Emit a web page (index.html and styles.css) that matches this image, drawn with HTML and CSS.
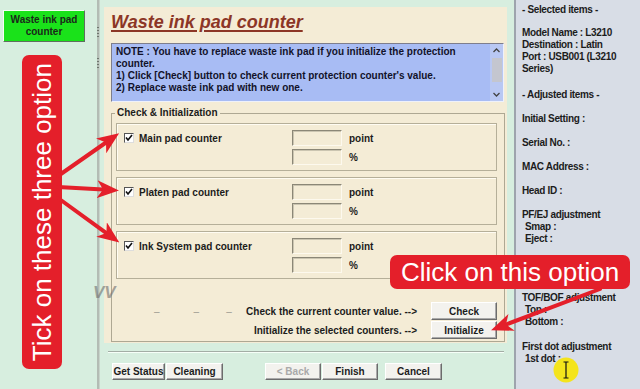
FILE: index.html
```html
<!DOCTYPE html>
<html lang="en">
<head>
    <meta charset="UTF-8">
    <title>Waste ink pad counter</title>
    <link rel="stylesheet" href="styles.css">
</head>
<body>
    <div class="screen">
        <aside class="sidebar">
            <button class="nav-btn">Waste ink pad<br>counter</button>
        </aside>

        <div class="splitter">
            <span class="grip"></span>
            <span class="grip grip-low"></span>
        </div>

        <main class="wizard">
            <section class="panel">
                <h1 class="title">Waste ink pad counter</h1>

                <div class="note">
                    <p>NOTE : You have to replace waste ink pad if you initialize the protection counter.<br>1) Click [Check] button to check current protection counter's value.<br>2) Replace waste ink pad with new one.</p>
                    <div class="scrollbar">
                        <svg width="9" height="12" viewBox="0 0 9 12"><path d="M1.5 8 L4.5 5 L7.5 8" fill="none" stroke="#444" stroke-width="1.3"/></svg>
                        <span class="thumb"></span>
                        <svg class="scroll-down" width="9" height="12" viewBox="0 0 9 12"><path d="M1.5 4 L4.5 7 L7.5 4" fill="none" stroke="#444" stroke-width="1.3"/></svg>
                    </div>
                </div>

                <fieldset class="group">
                    <legend>Check &amp; Initialization</legend>

                    <div class="counter">
                        <label class="check"><span class="box"><svg width="8" height="8" viewBox="0 0 8 8"><path d="M1 3.5 L3 6 L7 1" fill="none" stroke="#111" stroke-width="1.6"/></svg></span>Main pad counter</label>
                        <span class="field"></span>
                        <span>point</span>
                        <span></span>
                        <span class="field"></span>
                        <span>%</span>
                    </div>

                    <div class="counter">
                        <label class="check"><span class="box"><svg width="8" height="8" viewBox="0 0 8 8"><path d="M1 3.5 L3 6 L7 1" fill="none" stroke="#111" stroke-width="1.6"/></svg></span>Platen pad counter</label>
                        <span class="field"></span>
                        <span>point</span>
                        <span></span>
                        <span class="field"></span>
                        <span>%</span>
                    </div>

                    <div class="counter">
                        <label class="check"><span class="box"><svg width="8" height="8" viewBox="0 0 8 8"><path d="M1 3.5 L3 6 L7 1" fill="none" stroke="#111" stroke-width="1.6"/></svg></span>Ink System pad counter</label>
                        <span class="field"></span>
                        <span>point</span>
                        <span></span>
                        <span class="field"></span>
                        <span>%</span>
                    </div>

                    <div class="action">
                        <div class="action-row">
                            <span class="dashes"><span>–</span><span>–</span><span>–</span></span>
                            <span>Check the current counter value. --&gt;</span>
                            <button class="btn btn-wide">Check</button>
                        </div>
                        <div class="action-row">
                            <span>Initialize the selected counters. --&gt;</span>
                            <button class="btn btn-wide">Initialize</button>
                        </div>
                    </div>
                </fieldset>
            </section>

            <div class="separator"></div>

            <div class="footer">
                <button class="btn btn-status">Get Status</button>
                <button class="btn btn-clean">Cleaning</button>
                <button class="btn btn-back" disabled>&lt; Back</button>
                <button class="btn btn-finish">Finish</button>
                <button class="btn btn-cancel">Cancel</button>
            </div>
        </main>

        <aside class="info">
            <p class="info-head">- Selected items -</p>
            <p class="info-model">Model Name : L3210<br>Destination : Latin<br>Port : USB001 (L3210<br>Series)</p>
            <p class="info-adjusted">- Adjusted items -</p>
            <p>Initial Setting :</p>
            <p>Serial No. :</p>
            <p>MAC Address :</p>
            <p>Head ID :</p>
            <p>PF/EJ adjustment<br><span class="sub">Smap :</span><br><span class="sub">Eject :</span></p>
            <p class="info-tof">TOF/BOF adjustment<br><span class="sub">Top :</span><br><span class="sub">Bottom :</span></p>
            <p class="info-dot">First dot adjustment<br><span class="sub">1st dot :</span></p>
        </aside>
    </div>

    <!-- annotations drawn over the screenshot -->
    <span class="watermark">VV</span>
    <div class="callout callout-tick"><span>Tick on these three option</span></div>
    <div class="callout callout-click">Click on this option</div>

    <svg class="arrows" width="640" height="389" viewBox="0 0 640 389">
        <defs>
            <marker id="head" markerUnits="userSpaceOnUse" markerWidth="22" markerHeight="18" viewBox="0 0 22 18" refX="6" refY="9" orient="auto">
                <path d="M0 0 L22 9 L0 18 L6 9 Z" fill="#e41f2a"/>
            </marker>
        </defs>
        <g stroke="#e41f2a" stroke-width="4" stroke-linecap="round">
            <line x1="58" y1="176" x2="106" y2="142.5" marker-end="url(#head)"/>
            <line x1="58" y1="187" x2="103" y2="189.6" marker-end="url(#head)"/>
            <line x1="58" y1="198" x2="106.4" y2="233.1" marker-end="url(#head)"/>
            <line x1="600" y1="289" x2="506" y2="324.5" marker-end="url(#head)"/>
        </g>
    </svg>

    <svg class="cursor" width="26" height="26" viewBox="0 0 26 26">
        <circle cx="13" cy="13" r="12.5" fill="#f4e41c"/>
        <path d="M10.5 5 H15.5 M13 5 V21 M10.5 21 H15.5" fill="none" stroke="#111" stroke-width="1.2"/>
    </svg>
</body>
</html>
```

FILE: styles.css
```css
body {
    margin: 0;
    width: 640px;
    height: 389px;
    overflow: hidden;
    position: relative;
    background-color: #d7eedf;
    font-family: "Liberation Sans", Arial, sans-serif;
    font-size: 10px;
    font-weight: bold;
    color: #1c1c1c;
}

.screen {
    display: flex;
    height: 389px;
}

/* left navigation */
.sidebar {
    width: 97px;
    padding: 10px 0 0 3px;
    box-sizing: border-box;
}

.nav-btn {
    width: 82px;
    height: 32px;
    padding: 0;
    background-color: #1ae21a;
    border: 1px solid;
    border-color: #f2fff2 #5f6f5f #5f6f5f #f2fff2;
    font: bold 10px/12px "Liberation Sans", Arial, sans-serif;
    color: #1b281b;
}

.splitter {
    width: 3px;
    background-color: #b3bcb4;
    border-right: 1px solid #c7d4ca;
    display: flex;
    flex-direction: column;
    align-items: center;
    padding-top: 27px;
    box-sizing: border-box;
}

.grip {
    width: 2px;
    height: 11px;
    background: repeating-linear-gradient(#6f776f 0 1px, transparent 1px 3px);
}

.grip-low {
    margin-top: 20px;
}

/* wizard page */
.wizard {
    width: 413px;
    display: flex;
    flex-direction: column;
}

.panel {
    margin: 7px 6px 0 4px;
    padding: 4px 0 1px 7px;
    background-color: #f4ecd6;
}

.title {
    margin: 0;
    font-size: 18px;
    line-height: 22px;
    font-style: italic;
    color: #8c3626;
    text-decoration: underline;
    text-decoration-thickness: 2px;
    text-underline-offset: 2px;
}

.note {
    display: flex;
    width: 393px;
    height: 59px;
    margin-top: 10px;
    box-sizing: border-box;
    border: 1px solid;
    border-color: #7e7e8c #eef1fb #eef1fb #7e7e8c;
    background-color: #a8bcf4;
}

.note p {
    flex: 1;
    margin: 0;
    padding: 2px 0 0 4px;
    line-height: 12px;
    color: #12122a;
}

.scrollbar {
    width: 13px;
    display: flex;
    flex-direction: column;
    align-items: center;
    background-color: #b9c8f3;
}

.thumb {
    width: 10px;
    height: 24px;
    margin-top: 2px;
    background-color: #c4c6cf;
}

.scroll-down {
    margin-top: auto;
}

.group {
    width: 394px;
    margin: 5px 0 0;
    padding: 4px 7px 2px 4px;
    box-sizing: border-box;
    border: 1px solid #aea893;
}

.group legend {
    padding: 0 2px;
    margin-left: -1px;
    line-height: 12px;
}

.counter {
    height: 48px;
    box-sizing: border-box;
    padding: 6px 0 0 7px;
    border: 1px solid #b5af99;
    box-shadow: inset 1px 1px 0 #fffcf2;
    display: grid;
    grid-template-columns: 161px 50px auto;
    grid-template-rows: 16px 16px;
    column-gap: 7px;
    row-gap: 3px;
    align-items: center;
}

.counter + .counter {
    margin-top: 6px;
}

.check {
    display: flex;
    align-items: center;
    gap: 5px;
}

.box {
    width: 10px;
    height: 10px;
    box-sizing: border-box;
    border: 1px solid;
    border-color: #555 #ddd #ddd #555;
    background-color: #fff;
    display: flex;
    align-items: center;
    justify-content: center;
}

.field {
    height: 16px;
    box-sizing: border-box;
    border: 1px solid;
    border-color: #8b8777 #fdf9ee #fdf9ee #8b8777;
    box-shadow: inset 1px 1px 0 #cbc5b1;
}

.action {
    margin-top: 23px;
    display: flex;
    flex-direction: column;
    gap: 1px;
}

.action-row {
    height: 18px;
    display: flex;
    align-items: center;
    justify-content: flex-end;
    gap: 14px;
}

.dashes {
    margin-right: auto;
    padding-left: 38px;
    display: flex;
    color: #9c9a90;
    font-weight: normal;
}

.dashes span + span {
    margin-left: 34px;
}

.dashes span:last-child {
    margin-left: 27px;
}

.btn {
    height: 18px;
    padding: 0;
    background-color: #f3f2ee;
    border: 1px solid;
    border-color: #ffffff #6c6c6c #6c6c6c #ffffff;
    box-shadow: inset -1px -1px 0 #a9a9a9;
    font: bold 10px "Liberation Sans", Arial, sans-serif;
    color: #1c1c1c;
}

.btn-wide {
    width: 66px;
}

.separator {
    margin: 8px 9px 0 8px;
    border-top: 1px solid #a3ada5;
    border-bottom: 1px solid #f6fff8;
}

.footer {
    display: flex;
    padding: 10px 0 0 12px;
}

.footer .btn {
    height: 17px;
}

.btn-status {
    width: 53px;
}

.btn-clean {
    width: 57px;
    margin-left: 1px;
}

.btn-back {
    width: 56px;
    margin-left: 42px;
    color: #a9a9a9;
}

.btn-finish {
    width: 56px;
    margin-left: 1px;
}

.btn-cancel {
    width: 57px;
    margin-left: 7px;
}

/* right info column */
.info {
    flex: 1;
    margin-left: 1px;
    padding: 4px 0 0 6px;
    background-color: #d8dde6;
    border-left: 2px solid #9ea4ad;
    white-space: nowrap;
    letter-spacing: -0.35px;
}

.info p {
    margin: 12px 0 0;
    line-height: 12px;
}

.info .info-head {
    margin-top: 0;
}

.info .info-model {
    margin-top: 11px;
}

.info .info-adjusted {
    margin-top: 14px;
}

.info .info-tof {
    margin-top: 47px;
}

.info .info-dot {
    margin-top: 13px;
}

.sub {
    padding-left: 3px;
}

/* annotations */
.callout {
    position: absolute;
    background-color: #e41f2a;
    color: #fff;
    font-weight: normal;
    font-size: 26px;
    border-radius: 7px;
    display: flex;
    align-items: center;
    justify-content: center;
    white-space: nowrap;
}

.callout-tick {
    left: 22px;
    top: 55px;
    width: 40px;
    height: 314px;
}

.callout-tick span {
    writing-mode: vertical-rl;
    transform: rotate(180deg);
}

.callout-click {
    left: 390px;
    top: 255px;
    width: 240px;
    height: 34px;
}

.arrows {
    position: absolute;
    left: 0;
    top: 0;
    pointer-events: none;
}

.cursor {
    position: absolute;
    left: 553px;
    top: 357px;
}

.watermark {
    position: absolute;
    left: 93px;
    top: 283px;
    font-size: 17px;
    font-style: italic;
    color: rgba(110, 110, 110, 0.6);
}
```
